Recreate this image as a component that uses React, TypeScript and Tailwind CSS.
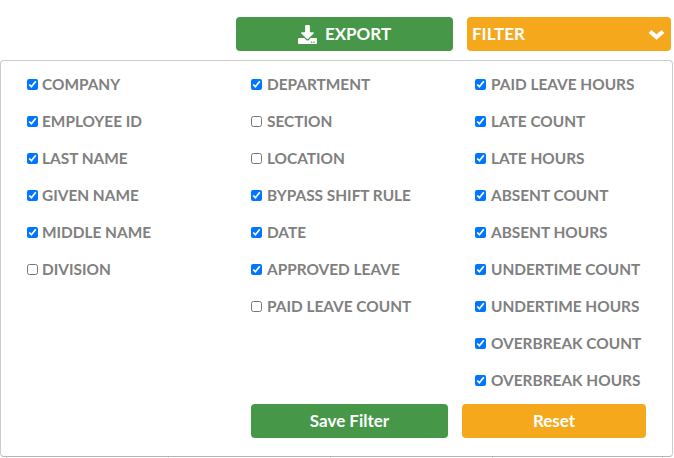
import { FaDownload } from "react-icons/fa";

const columns = [
  [
    { label: "COMPANY", checked: true },
    { label: "EMPLOYEE ID", checked: true },
    { label: "LAST NAME", checked: true },
    { label: "GIVEN NAME", checked: true },
    { label: "MIDDLE NAME", checked: true },
    { label: "DIVISION", checked: false },
  ],
  [
    { label: "DEPARTMENT", checked: true },
    { label: "SECTION", checked: false },
    { label: "LOCATION", checked: false },
    { label: "BYPASS SHIFT RULE", checked: true },
    { label: "DATE", checked: true },
    { label: "APPROVED LEAVE", checked: true },
    { label: "PAID LEAVE COUNT", checked: false },
  ],
  [
    { label: "PAID LEAVE HOURS", checked: true },
    { label: "LATE COUNT", checked: true },
    { label: "LATE HOURS", checked: true },
    { label: "ABSENT COUNT", checked: true },
    { label: "ABSENT HOURS", checked: true },
    { label: "UNDERTIME COUNT", checked: true },
    { label: "UNDERTIME HOURS", checked: true },
    { label: "OVERBREAK COUNT", checked: true },
    { label: "OVERBREAK HOURS", checked: true },
  ],
];

export default function App() {
  return (
    <div className="h-[458px] w-[674px] overflow-hidden bg-white font-['Lato',sans-serif]">
      <div className="flex pl-[236px] pt-[17px]">
        <button className="flex h-[34px] w-[217px] items-center justify-center gap-[8px] rounded-[4px] bg-[#469748] text-[17px] font-bold text-white">
          <FaDownload size={19} />
          EXPORT
        </button>
        <button className="ml-[14px] flex h-[34px] w-[204px] items-center justify-between rounded-[4px] bg-[#f6a81d] pl-[5px] pr-[6px] text-[17px] font-bold text-white">
          FILTER
          <svg width="17" height="11" viewBox="0 0 17 11" fill="none" stroke="currentColor" strokeWidth="4.2">
            <polyline points="2,2.5 8.5,8 15,2.5" />
          </svg>
        </button>
      </div>
      <div className="mt-[9px] h-[397px] w-[673px] rounded-[4px] border border-[#cccccc] border-b-[#b5b5b5] pl-[26px] pt-[5px]">
        <div className="flex">
          {columns.map((column, i) => (
            <div key={i} className={i === 2 ? "w-[180px]" : "w-[224px]"}>
              {column.map((item) => (
                <label
                  key={item.label}
                  className={
                    i === 0
                      ? "flex h-[37px] items-center gap-[4px] text-[15.4px] font-bold text-[#808080]"
                      : "flex h-[37px] items-center gap-[5px] text-[15.4px] font-bold text-[#808080]"
                  }
                >
                  <input type="checkbox" defaultChecked={item.checked} className="m-0 h-[11px] w-[11px]" />
                  {item.label}
                </label>
              ))}
            </div>
          ))}
        </div>
        <div className="mt-[5px] flex pl-[224px]">
          <button className="h-[34px] w-[197px] rounded-[4px] bg-[#469748] text-[17px] font-bold text-white">Save Filter</button>
          <button className="ml-[14px] h-[34px] w-[184px] rounded-[4px] bg-[#f6a81d] text-[17px] font-bold text-white">Reset</button>
        </div>
      </div>
      {/* table column lines peeking out under the panel */}
      <div className="flex h-[1px] pl-[6px]">
        <div className="w-[162px] border-l border-[#dddddd]" />
        <div className="w-[162px] border-l border-[#dddddd]" />
        <div className="w-[162px] border-l border-[#dddddd]" />
        <div className="w-[171px] border-x border-[#dddddd]" />
      </div>
    </div>
  );
}
